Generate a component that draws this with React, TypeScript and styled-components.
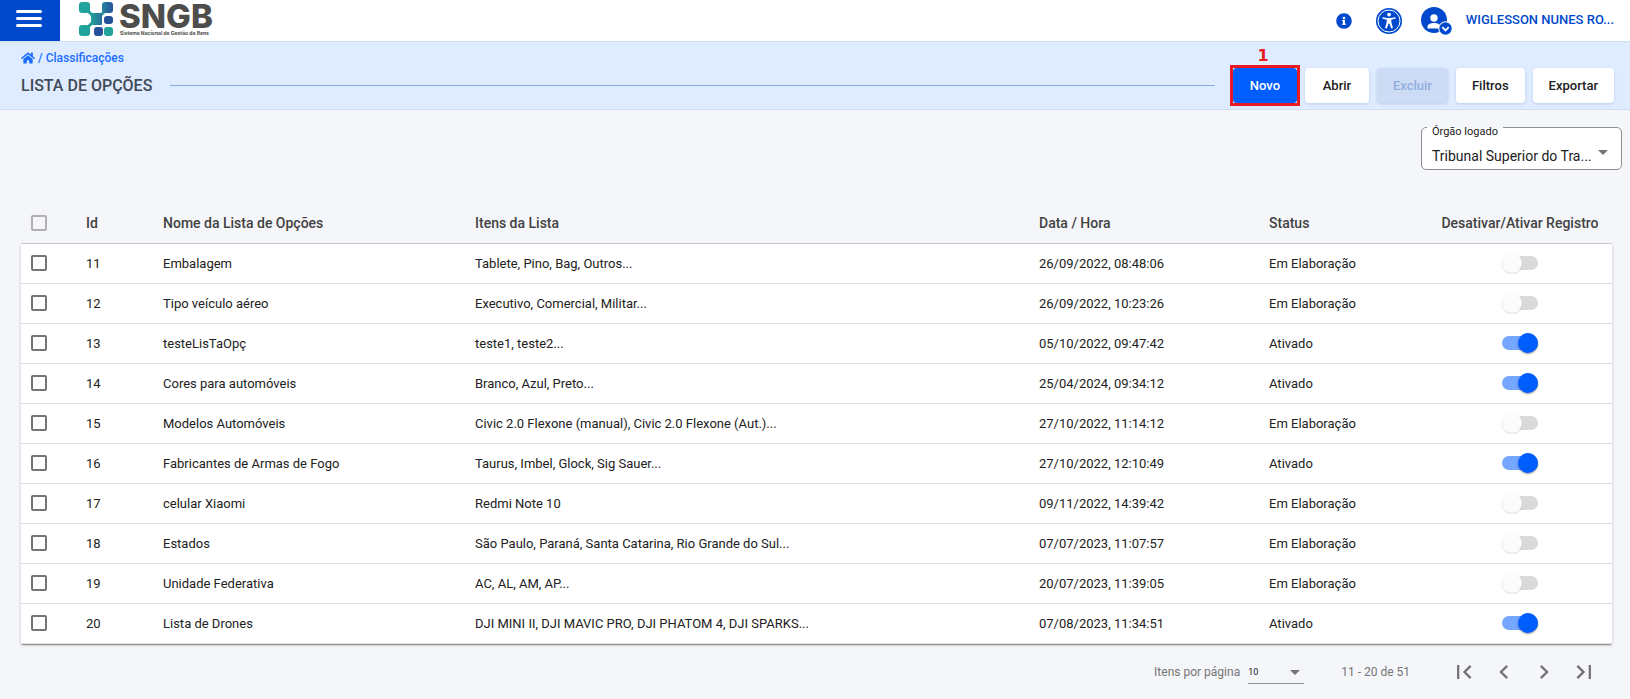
import React, { useState } from "react";
import styled, { createGlobalStyle } from "styled-components";
import { FaHome, FaInfoCircle } from "react-icons/fa";
import {
  MdChevronLeft,
  MdChevronRight,
  MdFirstPage,
  MdLastPage,
} from "react-icons/md";

const GlobalStyle = createGlobalStyle`
  *, *::before, *::after { box-sizing: border-box; }
  body {
    margin: 0;
    background: #f5f6fa;
    color: #212121;
    font-family: Roboto, "Liberation Sans", sans-serif;
    font-size: 13px;
  }
  button, select, input { font: inherit; color: inherit; margin: 0; }
`;

const TopBar = styled.header`
  display: flex;
  align-items: center;
  height: 41px;
  background: #fff;
`;

const MenuButton = styled.button`
  display: grid;
  place-items: center;
  width: 60px;
  height: 41px;
  padding: 0 2px 3px 0;
  border: 0;
  background: #0049cc;
  color: #fff;
`;

const Logo = styled.a`
  display: flex;
  align-items: center;
  gap: 5px;
  height: 41px;
  margin-left: 19px;
  padding-bottom: 3px;
  color: #4d4d4b;
  text-decoration: none;
`;

const LogoText = styled.span`
  display: flex;
  flex-direction: column;
  font-family: Inter, sans-serif;
`;

const LogoName = styled.span`
  font-size: 33px;
  font-weight: 800;
  line-height: 28px;
`;

const LogoTagline = styled.span`
  padding-left: 1px;
  font-size: 5px;
  font-weight: 700;
  line-height: 7px;
  white-space: nowrap;
`;

const UserArea = styled.div`
  display: flex;
  align-items: center;
  margin-left: auto;
  padding-right: 16px;
  color: #0049cc;
`;

const IconButton = styled.button<{ $gap?: number }>`
  display: flex;
  margin-right: ${(p) => p.$gap ?? 0}px;
  padding: 0;
  border: 0;
  background: none;
  color: inherit;
`;

const UserName = styled.span`
  padding-bottom: 2px;
  font-weight: 500;
  line-height: 20px;
  white-space: nowrap;
`;

const PageHeader = styled.div`
  border: solid #cfe0f5;
  border-width: 1px 0;
  height: 69px;
  padding: 6px 16px 0 21px;
  background: #dfebff;
`;

const Breadcrumb = styled.nav`
  display: flex;
  align-items: center;
  gap: 3px;
  height: 20px;
  color: #1a6eff;
  font-size: 12px;
  font-weight: 500;
`;

const CrumbLink = styled.a`
  display: flex;
  color: inherit;
  text-decoration: none;
`;

const TitleRow = styled.div`
  display: flex;
  align-items: center;
`;

const Title = styled.h1`
  margin: 0 18px 0 0;
  color: #424a55;
  font-size: 16px;
  font-weight: 500;
  line-height: 20px;
  white-space: nowrap;
`;

const Rule = styled.hr`
  flex: 1;
  margin: 0 18px 0 0;
  border: 0;
  border-top: 1px solid #86abde;
`;

const Actions = styled.div`
  display: flex;
  gap: 8px;
`;

const ActionButton = styled.button<{ $primary?: boolean }>`
  min-width: 64px;
  height: 35px;
  padding: 0 16px;
  border: 0;
  border-radius: 4px;
  background: ${(p) => (p.$primary ? "#005eff" : "#fff")};
  color: ${(p) => (p.$primary ? "#fff" : "#212121")};
  font-weight: 500;
  white-space: nowrap;
  box-shadow: 0 1px 3px rgba(60, 100, 160, 0.2);
  &:disabled {
    background: #ccdcf5;
    color: #92aee0;
  }
`;

const Marked = styled.div`
  position: relative;
  display: flex;
`;

const Mark = styled.div`
  position: absolute;
  inset: -3px;
  border: 3px solid #e81b22;
  pointer-events: none;
`;

const MarkNumber = styled.span`
  position: absolute;
  left: 0;
  right: 4px;
  bottom: 100%;
  color: #e81b22;
  font-family: "DejaVu Sans", sans-serif;
  font-size: 16px;
  font-weight: 700;
  line-height: 24px;
  text-align: center;
`;

const OrgRow = styled.div`
  display: flex;
  justify-content: flex-end;
  padding: 17px 8px 0 0;
`;

const OrgField = styled.label`
  position: relative;
  display: flex;
  align-items: center;
  width: 201px;
  height: 43px;
  border: 1px solid #8c8e92;
  border-radius: 5px;
  background: #fff;
`;

const OrgLabel = styled.span`
  position: absolute;
  top: -4px;
  left: 5px;
  padding: 0 5px;
  background: linear-gradient(#f5f6fa 4px, #fff 4px);
  font-size: 11px;
  line-height: 15px;
`;

const OrgSelect = styled.select`
  appearance: none;
  width: 100%;
  height: 41px;
  padding: 14px 10px 0;
  border: 0;
  background: none;
  font-size: 14px;
`;

const Arrow = styled.span`
  position: absolute;
  right: 13px;
  top: 22px;
  border: solid transparent;
  border-width: 5px 5px 0;
  border-top-color: #757575;
  pointer-events: none;
`;

const Main = styled.main`
  padding: 34px 18px 0 21px;
`;

const Table = styled.table`
  width: 100%;
  table-layout: fixed;
  border-collapse: separate;
  border-spacing: 0;
`;

const Col = styled.col<{ $width?: number }>`
  width: ${(p) => (p.$width ? `${p.$width}px` : "auto")};
`;

const HeadCell = styled.th<{ $center?: boolean }>`
  height: 40px;
  padding: 0 0 2px;
  border-bottom: 1px solid #cfd0d3;
  color: #424242;
  font-size: 14px;
  font-weight: 500;
  text-align: ${(p) => (p.$center ? "center" : "left")};
  white-space: nowrap;
`;

const Body = styled.tbody`
  background: #fff;
  box-shadow: 0 2px 1px -1px rgba(0, 0, 0, 0.3), 0 1px 3px rgba(0, 0, 0, 0.22);
`;

const Cell = styled.td<{ $center?: boolean; $control?: boolean }>`
  height: 40px;
  padding: 0 0 ${(p) => (p.$control ? 2 : 0)}px;
  border-bottom: 1px solid #dedede;
  text-align: ${(p) => (p.$center ? "center" : "left")};
  white-space: nowrap;
`;

const Check = styled.input`
  appearance: none;
  display: block;
  width: 16px;
  height: 16px;
  margin-left: 10px;
  border: 2px solid #757575;
  border-radius: 2px;
  &:checked { background: #005eff; border-color: #005eff; }
  &:disabled { border-color: #b0b0b0; }
`;

const Switch = styled.input`
  appearance: none;
  display: inline-flex;
  align-items: center;
  width: 36px;
  height: 14px;
  border-radius: 7px;
  background: #d9d9d9;
  vertical-align: middle;
  &::before {
    content: "";
    flex: none;
    width: 20px;
    height: 20px;
    border-radius: 50%;
    background: #fcfcfc;
    box-shadow: 0 1px 2px rgba(0, 0, 0, 0.14);
  }
  &:checked { justify-content: flex-end; background: #75a7ff; }
  &:checked::before {
    background: #005eff;
    box-shadow: 0 1px 2px rgba(0, 0, 0, 0.4);
  }
`;

const Paginator = styled.footer`
  display: flex;
  align-items: center;
  justify-content: flex-end;
  height: 55px;
  padding-right: 8px;
  color: #757575;
  font-size: 12px;
`;

const PageSize = styled.label`
  display: flex;
  align-items: center;
  gap: 8px;
`;

const SizeBox = styled.span`
  position: relative;
  width: 56px;
  height: 24px;
  border-bottom: 1px solid #8c8e92;
`;

const SizeSelect = styled.select`
  appearance: none;
  width: 100%;
  height: 23px;
  padding: 2px 0 0;
  border: 0;
  background: none;
  color: #212121;
  font-size: 9px;
`;

const SizeArrow = styled(Arrow)`
  right: 4px;
  top: 10px;
`;

const Range = styled.span`
  margin: 0 34px 0 37px;
`;

const PageButton = styled.button`
  display: grid;
  place-items: center;
  width: 40px;
  height: 40px;
  padding: 0;
  border: 0;
  background: none;
`;

const items = [
  { id: 11, name: "Embalagem", list: "Tablete, Pino, Bag, Outros...", date: "26/09/2022, 08:48:06", active: false },
  { id: 12, name: "Tipo veículo aéreo", list: "Executivo, Comercial, Militar...", date: "26/09/2022, 10:23:26", active: false },
  { id: 13, name: "testeLisTaOpç", list: "teste1, teste2...", date: "05/10/2022, 09:47:42", active: true },
  { id: 14, name: "Cores para automóveis", list: "Branco, Azul, Preto...", date: "25/04/2024, 09:34:12", active: true },
  { id: 15, name: "Modelos Automóveis", list: "Civic 2.0 Flexone (manual), Civic 2.0 Flexone (Aut.)...", date: "27/10/2022, 11:14:12", active: false },
  { id: 16, name: "Fabricantes de Armas de Fogo", list: "Taurus, Imbel, Glock, Sig Sauer...", date: "27/10/2022, 12:10:49", active: true },
  { id: 17, name: "celular Xiaomi", list: "Redmi Note 10", date: "09/11/2022, 14:39:42", active: false },
  { id: 18, name: "Estados", list: "São Paulo, Paraná, Santa Catarina, Rio Grande do Sul...", date: "07/07/2023, 11:07:57", active: false },
  { id: 19, name: "Unidade Federativa", list: "AC, AL, AM, AP...", date: "20/07/2023, 11:39:05", active: false },
  { id: 20, name: "Lista de Drones", list: "DJI MINI II, DJI MAVIC PRO, DJI PHATOM 4, DJI SPARKS...", date: "07/08/2023, 11:34:51", active: true },
];

const LogoMark = () => (
  <svg width="35" height="35" viewBox="0 0 35 35" aria-hidden="true">
    <defs>
      <linearGradient id="mid" x1="0" x2="1">
        <stop offset="0" stopColor="#20a39b" />
        <stop offset="1" stopColor="#2a6f9b" />
      </linearGradient>
      <linearGradient id="corner" x1="0" x2="1">
        <stop offset="0" stopColor="#2783a0" />
        <stop offset="1" stopColor="#27529b" />
      </linearGradient>
    </defs>
    <path d="M9 9l4 4M9 25l4-4M22 13l3-3" stroke="#2a9b9b" strokeWidth="3" fill="none" />
    <rect x="0" y="0" width="11" height="11" rx="3" fill="#20a39b" />
    <rect x="23" y="0" width="11" height="11" rx="3" fill="url(#corner)" />
    <rect x="12" y="11" width="11" height="12" rx="1" fill="url(#mid)" />
    <rect x="25" y="14" width="9" height="8" rx="3" fill="#27529b" />
    <rect x="0" y="23" width="11" height="11" rx="3" fill="#20a39b" />
    <rect x="15" y="25" width="9" height="9" rx="3" fill="#27529b" />
    <rect x="25" y="25" width="9" height="9" rx="3" fill="#20a39b" />
  </svg>
);

const AccessibilityIcon = () => (
  <svg width="26" height="26" viewBox="0 0 26 26" aria-hidden="true">
    <circle cx="13" cy="13" r="13" fill="currentColor" />
    <circle cx="13" cy="13" r="11" fill="none" stroke="#fff" strokeWidth="1" />
    <circle cx="13" cy="6.6" r="1.9" fill="#fff" />
    <path
      d="M7.3 9.2L11 10h4l3.700-.8a.8.8 0 0 1 .3 1.600L15.300 11.800V14l1.500 5.500a.9.9 0 0 1-1.700.5L13.300 15.500h-.6L10.900 20a.9.9 0 0 1-1.700-.5L10.700 14v-2.200L7 10.800a.8.8 0 0 1 .3-1.600z"
      fill="#fff"
    />
  </svg>
);

const UserIcon = () => (
  <svg width="31" height="28" viewBox="0 0 31 28" aria-hidden="true">
    <circle cx="13" cy="13" r="13" fill="currentColor" />
    <circle cx="13" cy="11" r="3.700" fill="#fff" />
    <path d="M6.500 21.500v-1.500c0-3 3-4 6.500-4s6.500 1 6.500 4v1.500z" fill="#fff" />
    <circle cx="24.500" cy="21.500" r="7.200" fill="#fff" />
    <circle cx="24.500" cy="21.500" r="6.200" fill="currentColor" />
    <path d="M21.300 20.200l3.200 3.200 3.200-3.200" stroke="#fff" strokeWidth="1.800" fill="none" />
  </svg>
);

export default function App() {
  const [active, setActive] = useState<Record<number, boolean>>(
    Object.fromEntries(items.map((item) => [item.id, item.active]))
  );

  return (
    <>
      <GlobalStyle />
      <TopBar>
        <MenuButton aria-label="Menu">
          <svg width="26" height="18" viewBox="0 0 26 18" aria-hidden="true">
            <path d="M1.500 1.500h23M1.500 8.500h23M1.500 15.500h23" stroke="currentColor" strokeWidth="3" strokeLinecap="round" />
          </svg>
        </MenuButton>
        <Logo href="#">
          <LogoMark />
          <LogoText>
            <LogoName>SNGB</LogoName>
            <LogoTagline>Sistema Nacional de Gestão de Bens</LogoTagline>
          </LogoText>
        </Logo>
        <UserArea>
          <IconButton aria-label="Informações" $gap={24}>
            <FaInfoCircle size={16} />
          </IconButton>
          <IconButton aria-label="Acessibilidade" $gap={19}>
            <AccessibilityIcon />
          </IconButton>
          <IconButton aria-label="Conta" $gap={14}>
            <UserIcon />
          </IconButton>
          <UserName>WIGLESSON NUNES RO...</UserName>
        </UserArea>
      </TopBar>

      <PageHeader>
        <Breadcrumb aria-label="Navegação">
          <CrumbLink href="#" aria-label="Início">
            <FaHome size={14} />
          </CrumbLink>
          <span>/</span>
          <CrumbLink href="#">Classificações</CrumbLink>
        </Breadcrumb>
        <TitleRow>
          <Title>LISTA DE OPÇÕES</Title>
          <Rule />
          <Actions>
            <Marked>
              <ActionButton $primary>Novo</ActionButton>
              <Mark />
              <MarkNumber>1</MarkNumber>
            </Marked>
            <ActionButton>Abrir</ActionButton>
            <ActionButton disabled>Excluir</ActionButton>
            <ActionButton>Filtros</ActionButton>
            <ActionButton>Exportar</ActionButton>
          </Actions>
        </TitleRow>
      </PageHeader>

      <OrgRow>
        <OrgField>
          <OrgLabel>Órgão logado</OrgLabel>
          <OrgSelect>
            <option>Tribunal Superior do Tra...</option>
          </OrgSelect>
          <Arrow />
        </OrgField>
      </OrgRow>

      <Main>
        <Table>
          <colgroup>
            <Col $width={65} />
            <Col $width={77} />
            <Col $width={312} />
            <Col />
            <Col $width={230} />
            <Col $width={159} />
            <Col $width={184} />
          </colgroup>
          <thead>
            <tr>
              <HeadCell>
                <Check type="checkbox" disabled aria-label="Selecionar todos" />
              </HeadCell>
              <HeadCell>Id</HeadCell>
              <HeadCell>Nome da Lista de Opções</HeadCell>
              <HeadCell>Itens da Lista</HeadCell>
              <HeadCell>Data / Hora</HeadCell>
              <HeadCell>Status</HeadCell>
              <HeadCell $center>Desativar/Ativar Registro</HeadCell>
            </tr>
          </thead>
          <Body>
            {items.map((item) => (
              <tr key={item.id}>
                <Cell $control>
                  <Check type="checkbox" aria-label={`Selecionar ${item.name}`} />
                </Cell>
                <Cell>{item.id}</Cell>
                <Cell>{item.name}</Cell>
                <Cell>{item.list}</Cell>
                <Cell>{item.date}</Cell>
                <Cell>{item.active ? "Ativado" : "Em Elaboração"}</Cell>
                <Cell $center $control>
                  <Switch
                    type="checkbox"
                    role="switch"
                    aria-label={`Ativar ${item.name}`}
                    checked={active[item.id]}
                    onChange={(e) => setActive({ ...active, [item.id]: e.target.checked })}
                  />
                </Cell>
              </tr>
            ))}
          </Body>
        </Table>

        <Paginator>
          <PageSize>
            Itens por página
            <SizeBox>
              <SizeSelect>
                <option>10</option>
              </SizeSelect>
              <SizeArrow />
            </SizeBox>
          </PageSize>
          <Range>11 - 20 de 51</Range>
          <PageButton aria-label="Primeira página">
            <MdFirstPage size={28} />
          </PageButton>
          <PageButton aria-label="Página anterior">
            <MdChevronLeft size={28} />
          </PageButton>
          <PageButton aria-label="Próxima página">
            <MdChevronRight size={28} />
          </PageButton>
          <PageButton aria-label="Última página">
            <MdLastPage size={28} />
          </PageButton>
        </Paginator>
      </Main>
    </>
  );
}
